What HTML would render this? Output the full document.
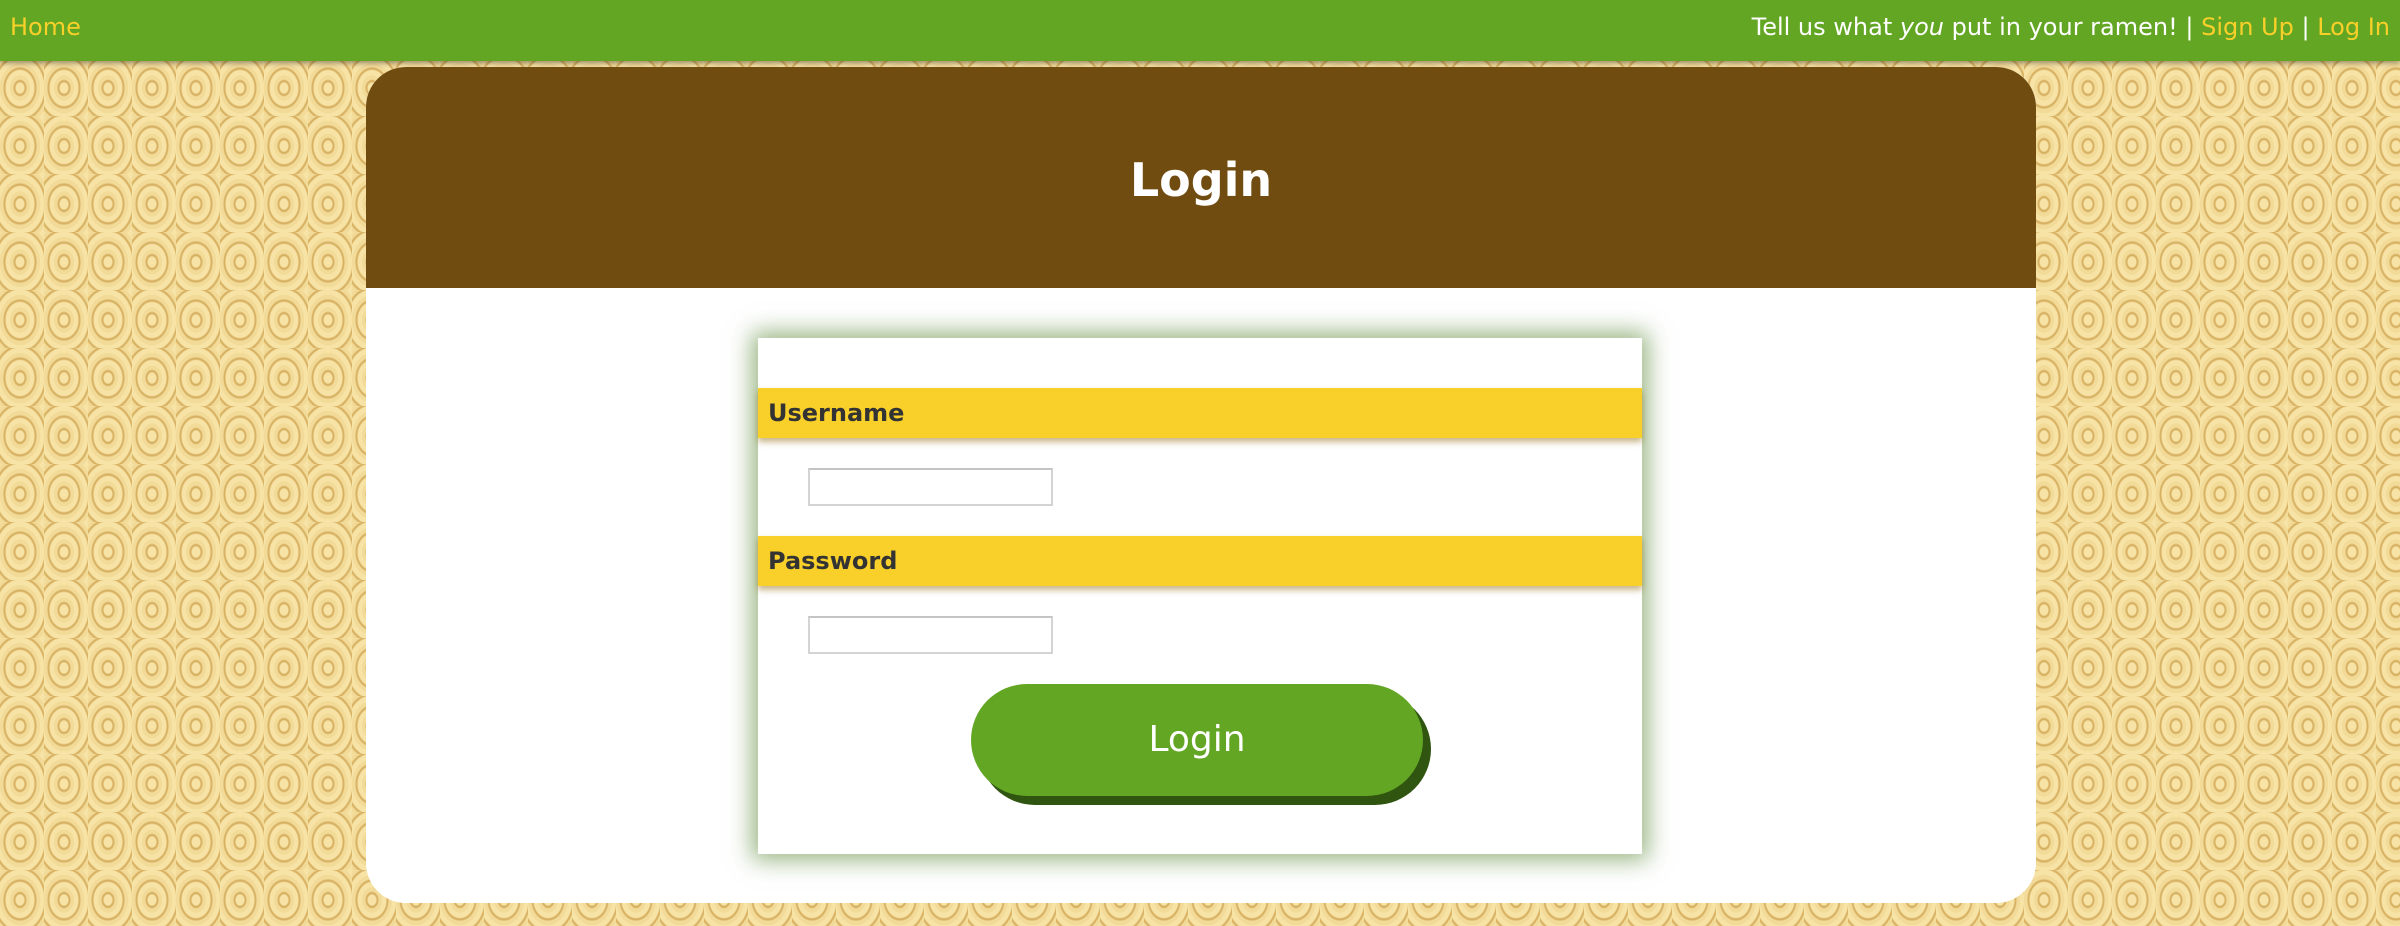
<!DOCTYPE html>
<html><head><meta charset="utf-8"><style>
html,body{margin:0;padding:0;width:2400px;height:926px;overflow:hidden}
body{font-family:"DejaVu Sans","Liberation Sans",sans-serif;
background-color:#ecd08c;
background-image:
repeating-radial-gradient(ellipse at 20px 30px,#f7e3a6 0 4px,#d8b264 5px 6px,#f2da98 7px 10px),
repeating-radial-gradient(ellipse at 50px 10px,rgba(247,227,166,.6) 0 4px,rgba(214,174,96,.5) 5px 6px,rgba(242,218,152,.6) 7px 10px);
background-size:44px 58px,70px 36px;position:relative}
.nav{position:absolute;left:0;top:0;width:2400px;height:61px;background:#62a623;box-shadow:0 2px 5px rgba(0,0,0,.4);font-size:24px;line-height:54px;color:#fff}
.nav .home{position:absolute;left:10px;color:#f9d02a}
.nav .right{position:absolute;right:10px}
.nav .right span{color:#f9d02a}
.card{position:absolute;left:366px;top:67px;width:1670px;height:836px;background:#fff;border-radius:40px;overflow:hidden}
.head{height:221px;background:#704c10;color:#fff;font-weight:bold;font-size:46px;text-align:center;line-height:226px}
.form{position:absolute;left:392px;top:271px;width:884px;height:516px;background:#fff;box-shadow:0 0 22px 6px rgba(70,120,30,.55)}
.bar{position:absolute;left:0;width:884px;height:50px;background:#f9d02a;box-shadow:0 4px 6px rgba(150,110,20,.5);font-weight:bold;font-size:24px;color:#333;line-height:50px;padding-left:10px;box-sizing:border-box}
.inp{position:absolute;left:50px;width:245px;height:38px;box-sizing:border-box;border:2px solid #d4d4d4;border-top-color:#c4c4c4;background:#fff}
.btn{position:absolute;left:213px;top:346px;width:452px;height:112px;background:#62a623;border-radius:56px;box-shadow:8px 9px 0 #2f5510;color:#fff;font-size:36px;text-align:center;line-height:112px}
</style></head><body>
<div class="nav"><span class="home">Home</span><span class="right">Tell us what <i>you</i> put in your ramen! | <span>Sign Up</span> | <span>Log In</span></span></div>
<div class="card">
<div class="head">Login</div>
<div class="form">
<div class="bar" style="top:50px">Username</div>
<div class="inp" style="top:130px"></div>
<div class="bar" style="top:198px">Password</div>
<div class="inp" style="top:278px"></div>
<div class="btn">Login</div>
</div>
</div>
</body></html>
